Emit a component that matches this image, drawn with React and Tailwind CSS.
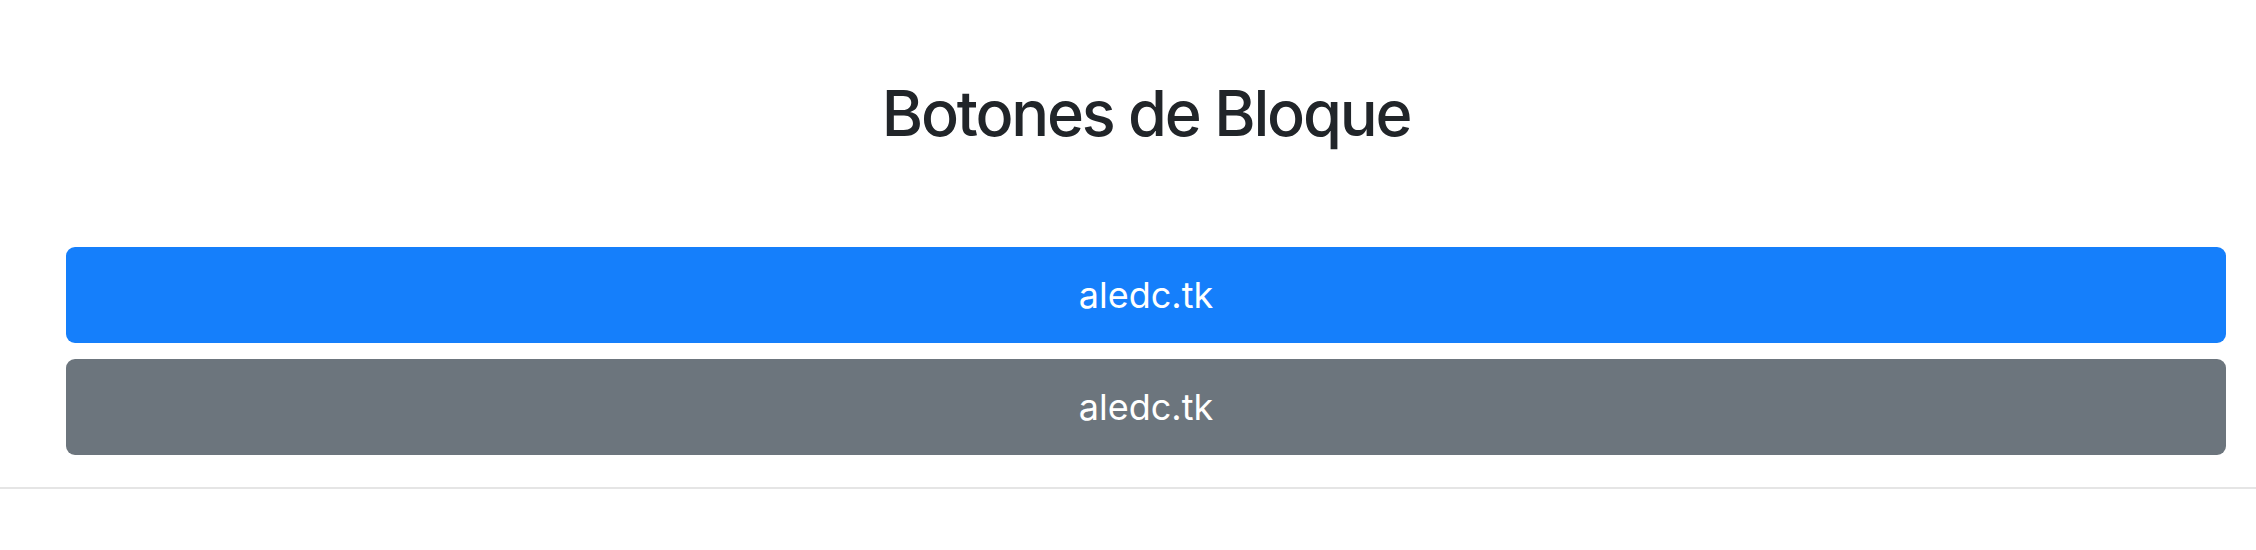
export default function App() {
  return (
    <div className="w-[2256px] h-[550px] bg-white" style={{ fontFamily: "Inter, 'Liberation Sans', sans-serif" }}>
      <div className="pt-[82px] pl-[66px] pr-[30px]">
        <h1 className="text-center text-[63px] leading-none font-medium text-[#212529] tracking-[-2.2px]">Botones de Bloque</h1>
      </div>
      <div className="mt-[102px] pl-[66px] pr-[30px] flex flex-col gap-[16px]">
        <button className="h-[96px] w-full rounded-[9px] bg-[#157ffb] text-white text-[36px] flex items-center justify-center">aledc.tk</button>
        <button className="h-[96px] w-full rounded-[9px] bg-[#6c757d] text-white text-[36px] flex items-center justify-center">aledc.tk</button>
      </div>
      <div className="mt-[32px] h-[2px] w-full bg-[#e5e5e5]"></div>
    </div>
  );
}
